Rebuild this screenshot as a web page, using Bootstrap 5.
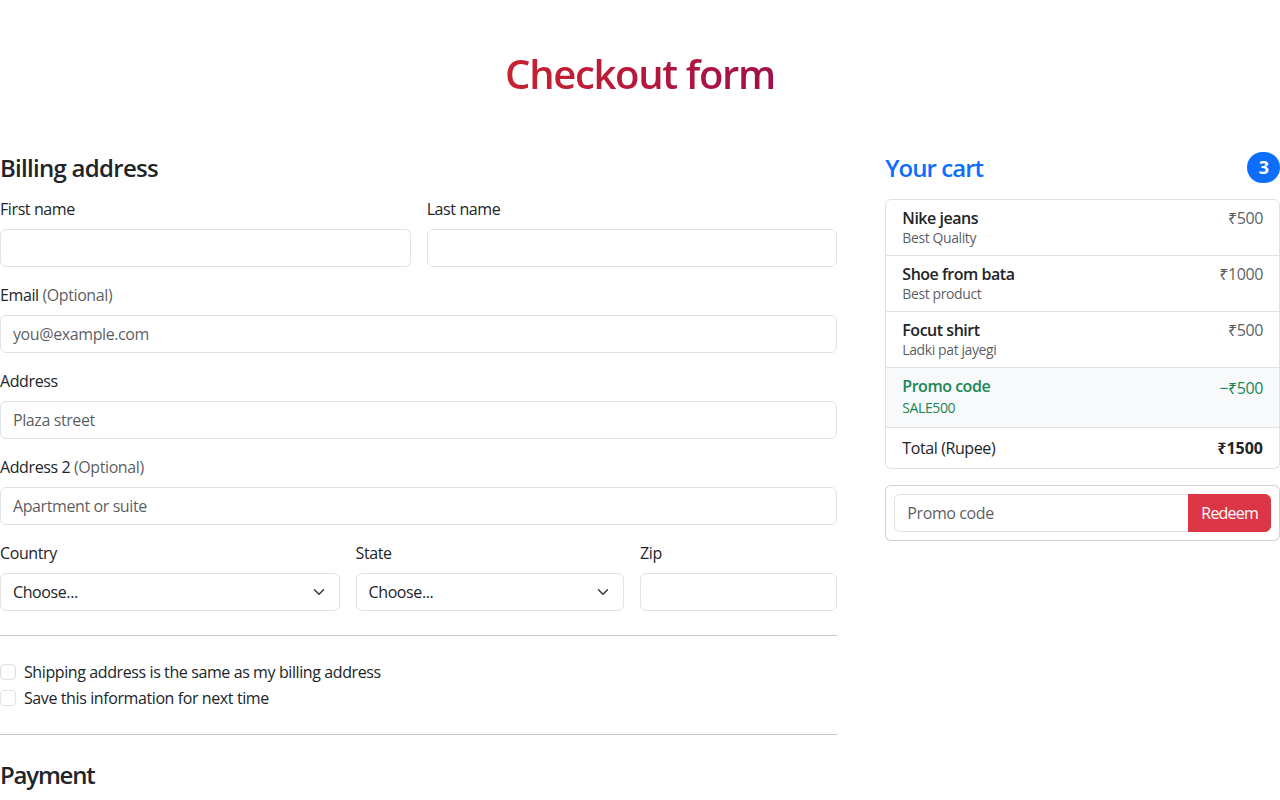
<!doctype html>
<html lang="en">
<head>
<meta charset="utf-8">
<title>Checkout form</title>
<link href="https://cdn.jsdelivr.net/npm/bootstrap@5.3.0/dist/css/bootstrap.min.css" rel="stylesheet">
<style>
html, body { overflow-x: hidden; }
body { font-family: "Open Sans", "Noto Sans", sans-serif; letter-spacing: -0.025em; }
.page-shell { width: 1280px; }
.title-text {
  background: linear-gradient(90deg, #c9222e, #a0104a);
  -webkit-background-clip: text;
  background-clip: text;
  color: transparent;
}
h1 { font-weight: 600; letter-spacing: -0.033em; padding-top: 2px; margin-bottom: 6px; }
h4 { font-weight: 600; letter-spacing: -0.03em; }
h6 { font-weight: 600; letter-spacing: -0.03em; }
h4.head-shift { padding-top: 2px; margin-bottom: 14px !important; }
h4.pay-title { letter-spacing: -0.05em; }
.cart-title { padding-top: 1.4px; letter-spacing: -0.04em; }
h6.my-0 { padding-top: 1px; margin-bottom: -1px !important; }
.form-control, .form-select { letter-spacing: -0.025em; }
.btn { letter-spacing: -0.05em; }
strong { letter-spacing: 0; }
</style>
</head>
<body>
<main class="page-shell">
  <div class="py-5 text-center">
    <h1><span class="title-text d-inline-block">Checkout form</span></h1>
  </div>
  <div class="row g-5">
    <div class="col-4 order-last">
      <h4 class="d-flex justify-content-between align-items-center mb-3">
        <span class="text-primary cart-title">Your cart</span>
        <span class="badge bg-primary rounded-pill">3</span>
      </h4>
      <ul class="list-group mb-3">
        <li class="list-group-item d-flex justify-content-between lh-sm">
          <div><h6 class="my-0">Nike jeans</h6><small class="text-body-secondary">Best Quality</small></div>
          <span class="text-body-secondary">₹500</span>
        </li>
        <li class="list-group-item d-flex justify-content-between lh-sm">
          <div><h6 class="my-0">Shoe from bata</h6><small class="text-body-secondary">Best product</small></div>
          <span class="text-body-secondary">₹1000</span>
        </li>
        <li class="list-group-item d-flex justify-content-between lh-sm">
          <div><h6 class="my-0">Focut shirt</h6><small class="text-body-secondary">Ladki pat jayegi</small></div>
          <span class="text-body-secondary">₹500</span>
        </li>
        <li class="list-group-item d-flex justify-content-between bg-body-tertiary">
          <div class="text-success"><h6 class="my-0">Promo code</h6><small>SALE500</small></div>
          <span class="text-success">−₹500</span>
        </li>
        <li class="list-group-item d-flex justify-content-between">
          <span>Total (Rupee)</span>
          <strong>₹1500</strong>
        </li>
      </ul>
      <form class="card p-2">
        <div class="input-group">
          <input type="text" class="form-control" placeholder="Promo code">
          <button type="button" class="btn btn-danger">Redeem</button>
        </div>
      </form>
    </div>
    <div class="col-8">
      <h4 class="mb-3 head-shift">Billing address</h4>
      <form>
        <div class="row g-3">
          <div class="col-6">
            <label class="form-label" for="firstName">First name</label>
            <input type="text" class="form-control" id="firstName">
          </div>
          <div class="col-6">
            <label class="form-label" for="lastName">Last name</label>
            <input type="text" class="form-control" id="lastName">
          </div>
          <div class="col-12">
            <label class="form-label" for="email">Email <span class="text-body-secondary">(Optional)</span></label>
            <input type="email" class="form-control" id="email" placeholder="you@example.com">
          </div>
          <div class="col-12">
            <label class="form-label" for="address">Address</label>
            <input type="text" class="form-control" id="address" placeholder="Plaza street">
          </div>
          <div class="col-12">
            <label class="form-label" for="address2">Address 2 <span class="text-body-secondary">(Optional)</span></label>
            <input type="text" class="form-control" id="address2" placeholder="Apartment or suite">
          </div>
          <div class="col-5">
            <label class="form-label" for="country">Country</label>
            <select class="form-select" id="country"><option>Choose...</option></select>
          </div>
          <div class="col-4">
            <label class="form-label" for="state">State</label>
            <select class="form-select" id="state"><option>Choose...</option></select>
          </div>
          <div class="col-3">
            <label class="form-label" for="zip">Zip</label>
            <input type="text" class="form-control" id="zip">
          </div>
        </div>
        <hr class="my-4">
        <div class="form-check">
          <input type="checkbox" class="form-check-input" id="same-address">
          <label class="form-check-label" for="same-address">Shipping address is the same as my billing address</label>
        </div>
        <div class="form-check">
          <input type="checkbox" class="form-check-input" id="save-info">
          <label class="form-check-label" for="save-info">Save this information for next time</label>
        </div>
        <hr class="my-4">
        <h4 class="mb-3 head-shift pay-title">Payment</h4>
      </form>
    </div>
  </div>
</main>
<script src="https://cdn.jsdelivr.net/npm/bootstrap@5.3.0/dist/js/bootstrap.bundle.min.js"></script>
</body>
</html>
